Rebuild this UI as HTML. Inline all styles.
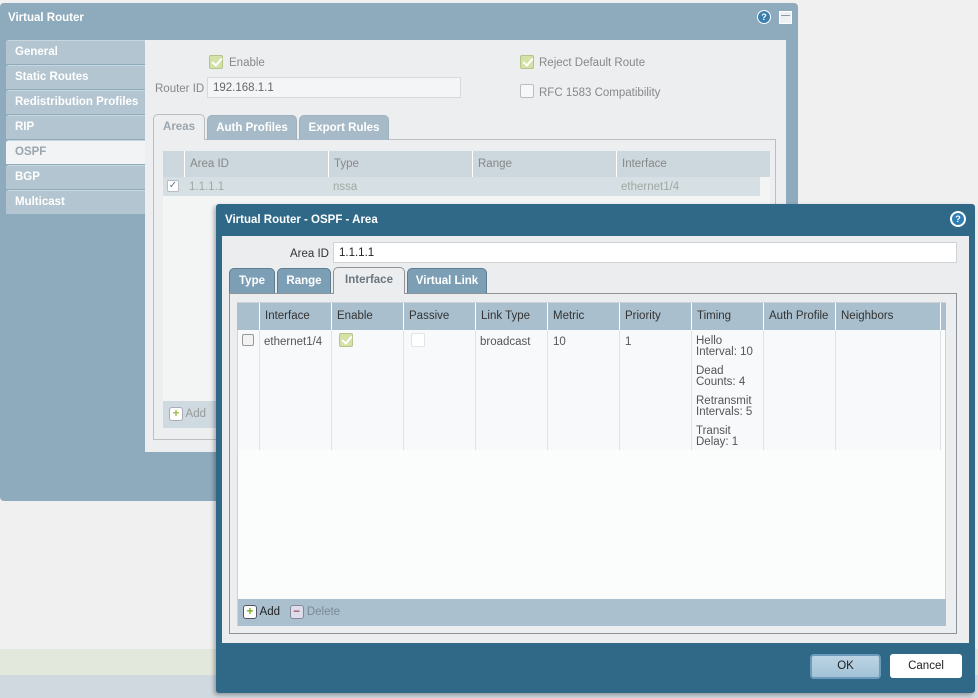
<!DOCTYPE html>
<html><head><meta charset="utf-8"><style>
*{box-sizing:border-box;margin:0;padding:0}
body{width:978px;height:698px;position:relative;overflow:hidden;background:#eff0ef;font-family:"Liberation Sans",sans-serif;font-size:11.5px;color:#333;white-space:nowrap}
.a{position:absolute}
.cb{position:absolute;width:14px;height:14px;border:1px solid #b8bec3;background:#fff;border-radius:2px}
.cb.on{background:#d4e2a8;border-color:#b5c48a}
.cb.on:after{content:"";position:absolute;left:4px;top:0px;width:4px;height:8px;border:solid #fff;border-width:0 2px 2px 0;transform:rotate(40deg)}
.nav{position:absolute;left:6px;width:139px;height:24px;background:#b3c5d1;color:#fff;font-weight:bold;padding:5px 9px;border-radius:3px 0 0 0;border-top:1px solid #c8d6df}
.tab{position:absolute;height:25px;background:#7c9fb6;color:#fff;font-weight:bold;text-align:center;padding-top:6px;border:1px solid #5d7d92;border-bottom:none;border-radius:5px 5px 0 0}
.th{position:absolute;top:0;height:100%;border-left:1px solid #fff;padding:7px 5px}
.vl{position:absolute;width:1px;background:#dde2e5}
</style></head><body>
<div class="a" style="left:0;top:649px;width:978px;height:26px;background:#e3e8dd"></div>
<div class="a" style="left:0;top:675px;width:978px;height:23px;background:#d0d9e0"></div>

<div class="a" style="left:0;top:3px;width:798px;height:498px;background:#8eabbd;border-radius:4px"></div>
<div class="a" style="left:8px;top:12px;color:#fff;font-weight:bold">Virtual Router</div>
<div class="a" style="left:757px;top:10px;width:14px;height:14px;border-radius:50%;background:#3a7fb0;border:1px solid #fff;color:#fff;font-size:9px;font-weight:bold;text-align:center;line-height:12px">?</div>
<div class="a" style="left:779px;top:11px;width:13px;height:13px;background:#eef1f3;border:1px solid #fff"><div style="margin:3px 1px 0;height:1px;background:#8a9ba6"></div></div>
<div class="a" style="left:145px;top:40px;width:641px;height:412px;background:#eceef0"></div>
<div class="nav" style="top:40px">General</div>
<div class="nav" style="top:65px">Static Routes</div>
<div class="nav" style="top:90px">Redistribution Profiles</div>
<div class="nav" style="top:115px">RIP</div>
<div class="nav" style="top:140px;background:#f1f3f4;color:#9aa5ad">OSPF</div>
<div class="nav" style="top:165px">BGP</div>
<div class="nav" style="top:190px">Multicast</div>

<div class="cb on" style="left:209px;top:55px"></div><div class="a" style="left:229px;top:57px;color:#888">Enable</div>
<div class="a" style="left:155px;top:83px;color:#888">Router ID</div>
<div class="a" style="left:207px;top:77px;width:254px;height:21px;background:#f4f5f6;border:1px solid #d6dadd;padding:4px 5px;color:#666">192.168.1.1</div>
<div class="cb on" style="left:520px;top:55px"></div><div class="a" style="left:539px;top:57px;color:#888">Reject Default Route</div>
<div class="cb" style="left:520px;top:84px;background:#f6f7f8"></div><div class="a" style="left:539px;top:87px;color:#888">RFC 1583 Compatibility</div>

<div class="a" style="left:153px;top:139px;width:623px;height:301px;border:1px solid #b9bfc3"></div>
<div class="tab" style="left:153px;top:114px;width:52px;height:26px;background:#eceef0;color:#9aa5ad;border-color:#b9bfc3">Areas</div>
<div class="tab" style="left:207px;top:115px;width:90px;background:#a6bac8;border-color:#9fb1bd">Auth Profiles</div>
<div class="tab" style="left:299px;top:115px;width:90px;background:#a6bac8;border-color:#9fb1bd">Export Rules</div>
<div class="a" style="left:163px;top:151px;width:607px;height:277px;background:#f3f4f4"></div>
<div class="a" style="left:163px;top:151px;width:607px;height:26px;background:#ccd7de;color:#888">
<div class="th" style="left:21px;width:144px">Area ID</div><div class="th" style="left:165px;width:144px">Type</div><div class="th" style="left:309px;width:144px">Range</div><div class="th" style="left:453px;width:144px">Interface</div></div>
<div class="a" style="left:163px;top:177px;width:597px;height:19px;background:#d6dfe4;color:#a0a8a0">
<div class="a" style="left:26px;top:4px">1.1.1.1</div><div class="a" style="left:170px;top:4px">nssa</div><div class="a" style="left:458px;top:4px">ethernet1/4</div></div>
<div class="cb" style="left:167px;top:180px;width:12px;height:12px;color:#678;font-size:10px;line-height:10px;text-align:center">✓</div>
<div class="a" style="left:163px;top:401px;width:607px;height:27px;background:#cfd9e0;color:#999;padding:6px 0 0 6px"><span style="display:inline-block;width:14px;height:14px;border:1px solid #aab;border-radius:3px;background:#fff;color:#9b4;font-weight:bold;text-align:center;line-height:12px;vertical-align:middle">+</span> Add</div>

<div class="a" style="left:216px;top:204px;width:759px;height:489px;background:#306987;border-radius:3px;box-shadow:-2px 2px 4px rgba(0,0,0,.3)"></div>
<div class="a" style="left:225px;top:214px;color:#fff;font-weight:bold">Virtual Router - OSPF - Area</div>
<div class="a" style="left:950px;top:211px;width:16px;height:16px;border-radius:50%;background:#2f7fb7;border:2px solid #fff;color:#fff;font-size:9px;font-weight:bold;text-align:center;line-height:12px">?</div>
<div class="a" style="left:222px;top:236px;width:747px;height:407px;background:#ecedee"></div>
<div class="a" style="left:290px;top:248px;color:#333">Area ID</div>
<div class="a" style="left:333px;top:242px;width:624px;height:21px;background:#fff;border:1px solid #cfd3d6;padding:4px 5px;color:#222">1.1.1.1</div>
<div class="a" style="left:229px;top:293px;width:728px;height:341px;border:1px solid #8d9398"></div>
<div class="tab" style="left:229px;top:268px;width:46px">Type</div>
<div class="tab" style="left:277px;top:268px;width:54px">Range</div>
<div class="tab" style="left:333px;top:267px;width:72px;height:27px;background:#ecedee;color:#6a7780;border-color:#8d9398">Interface</div>
<div class="tab" style="left:407px;top:268px;width:80px">Virtual Link</div>

<div class="a" style="left:237px;top:302px;width:709px;height:324px;background:#fbfcfc;border:1px solid #ccd2d6"></div>
<div class="a" style="left:237px;top:303px;width:709px;height:27px;background:#a9bfcd;color:#333">
<div class="th" style="left:22px;width:72px">Interface</div><div class="th" style="left:94px;width:72px">Enable</div><div class="th" style="left:166px;width:72px">Passive</div><div class="th" style="left:238px;width:72px">Link Type</div><div class="th" style="left:310px;width:72px">Metric</div><div class="th" style="left:382px;width:72px">Priority</div><div class="th" style="left:454px;width:72px">Timing</div><div class="th" style="left:526px;width:72px">Auth Profile</div><div class="th" style="left:598px;width:105px">Neighbors</div><div class="th" style="left:703px;width:6px"></div></div>
<div class="a" style="left:238px;top:330px;width:702px;height:120px;background:#f7f9fa"></div>
<div class="vl" style="left:259px;top:330px;height:120px"></div><div class="vl" style="left:331px;top:330px;height:120px"></div><div class="vl" style="left:403px;top:330px;height:120px"></div><div class="vl" style="left:475px;top:330px;height:120px"></div><div class="vl" style="left:547px;top:330px;height:120px"></div><div class="vl" style="left:619px;top:330px;height:120px"></div><div class="vl" style="left:691px;top:330px;height:120px"></div><div class="vl" style="left:763px;top:330px;height:120px"></div><div class="vl" style="left:835px;top:330px;height:120px"></div><div class="vl" style="left:940px;top:330px;height:120px"></div>
<div class="cb" style="left:242px;top:334px;width:12px;height:12px;border-color:#999;background:#f3f3f3"></div>
<div class="a" style="left:264px;top:336px;color:#555">ethernet1/4</div>
<div class="cb on" style="left:339px;top:333px"></div>
<div class="cb" style="left:411px;top:333px;border-color:#e2e5e7"></div>
<div class="a" style="left:480px;top:336px;color:#555">broadcast</div>
<div class="a" style="left:553px;top:336px;color:#555">10</div>
<div class="a" style="left:625px;top:336px;color:#555">1</div>
<div class="a" style="left:696px;top:336px;color:#555;line-height:11px;width:66px">Hello<br>Interval: 10<div style="height:8px"></div>Dead<br>Counts: 4<div style="height:8px"></div>Retransmit<br>Intervals: 5<div style="height:8px"></div>Transit<br>Delay: 1</div>
<div class="a" style="left:238px;top:599px;width:708px;height:27px;background:#aac0ce;padding:6px 0 0 5px;color:#222"><span style="display:inline-block;width:14px;height:14px;border:1px solid #556;border-radius:3px;background:#fff;color:#7a2;font-weight:bold;text-align:center;line-height:12px;vertical-align:middle">+</span> Add &nbsp;&nbsp;<span style="display:inline-block;width:14px;height:14px;border:1px solid #889;border-radius:3px;background:#dde;color:#955;font-weight:bold;text-align:center;line-height:12px;vertical-align:middle">−</span> <span style="color:#7a8a95">Delete</span></div>

<div class="a" style="left:810px;top:654px;width:71px;height:25px;background:linear-gradient(#bcd4e4,#a3c2d6);border:2px solid #6c9cbb;border-radius:4px;text-align:center;line-height:21px;color:#222">OK</div>
<div class="a" style="left:890px;top:654px;width:72px;height:24px;background:#fff;border-radius:3px;text-align:center;line-height:24px;color:#222">Cancel</div>
</body></html>
